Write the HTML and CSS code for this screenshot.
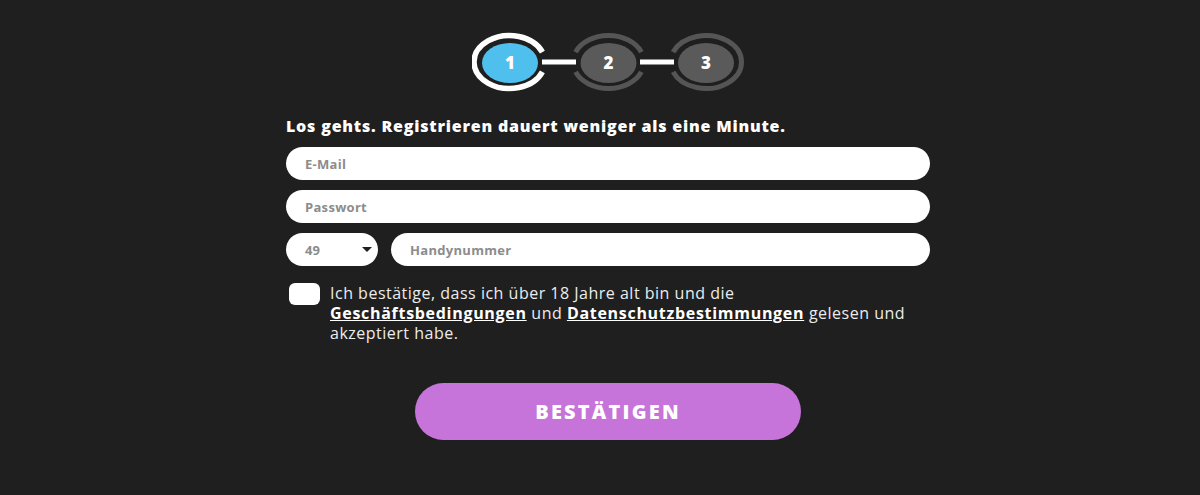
FILE: index.html
```html
<!DOCTYPE html>
<html lang="de">
<head>
<meta charset="utf-8">
<title>Registrieren</title>
<link rel="stylesheet" href="styles.css">
</head>
<body>
<div class="page">
  <main class="signup">
    <div class="stepper">
      <svg class="stepper-svg" width="280" height="62" viewBox="0 0 280 62" aria-hidden="true">
        <rect x="70" y="28.5" width="34" height="5" fill="#ffffff"/>
        <rect x="168" y="28.5" width="34" height="5" fill="#ffffff"/>
        <path d="M 70.4 21.1 A 35.5 26.5 0 1 0 70.4 40.9" fill="none" stroke="#ffffff" stroke-width="5.5"/>
        <ellipse cx="38" cy="32" rx="28" ry="20" fill="#4fbfee"/>
        <text x="38" y="38" class="step-num">1</text>
        <path d="M 103.6 21.1 A 35.5 26.5 0 0 1 169.4 21.1" fill="none" stroke="#555555" stroke-width="5"/>
        <path d="M 103.6 40.9 A 35.5 26.5 0 0 0 169.4 40.9" fill="none" stroke="#555555" stroke-width="5"/>
        <ellipse cx="136.5" cy="32" rx="28" ry="20" fill="#5a5a5a"/>
        <text x="136.5" y="38" class="step-num">2</text>
        <path d="M 201.1 21.1 A 35.5 26.5 0 1 1 201.1 40.9" fill="none" stroke="#555555" stroke-width="5"/>
        <ellipse cx="234" cy="32" rx="28" ry="20" fill="#5a5a5a"/>
        <text x="234" y="38" class="step-num">3</text>
      </svg>
    </div>

    <h1 class="title">Los gehts. Registrieren dauert weniger als eine Minute.</h1>

    <form class="form">
      <input class="field" type="email" placeholder="E-Mail">
      <input class="field" type="password" placeholder="Passwort">
      <div class="phone-row">
        <div class="select">
          <span class="select-value">49</span>
          <span class="select-arrow"></span>
        </div>
        <input class="field field-phone" type="tel" placeholder="Handynummer">
      </div>

      <label class="consent">
        <span class="checkbox"></span>
        <span class="consent-text">Ich bestätige, dass ich über 18 Jahre alt bin und die <a href="#" class="link">Geschäftsbedingungen</a> und <a href="#" class="link">Datenschutzbestimmungen</a> gelesen und akzeptiert habe.</span>
      </label>

      <div class="actions">
        <button type="button" class="submit">BESTÄTIGEN</button>
      </div>
    </form>
  </main>
</div>
</body>
</html>
```

FILE: styles.css
```css
html, body {
  margin: 0;
  padding: 0;
  background: #1f1f1f;
}

body {
  font-family: "Open Sans", "DejaVu Sans", sans-serif;
  color: #ececec;
  height: 495px;
  overflow: hidden;
}

.page {
  display: flex;
  justify-content: center;
  padding-left: 16px;
}

.signup {
  width: 644px;
  display: flex;
  flex-direction: column;
}

.stepper {
  display: flex;
  justify-content: center;
  padding-top: 31px;
}

.stepper-svg {
  display: block;
  margin-left: 7px;
}

.step-num {
  font-family: "Open Sans", sans-serif;
  font-weight: 800;
  font-size: 17px;
  fill: #ffffff;
  text-anchor: middle;
}

.title {
  margin: 23px 0 0 0;
  font-size: 16px;
  line-height: 20px;
  font-weight: 800;
  color: #ffffff;
  letter-spacing: 0.8px;
  white-space: nowrap;
}

.form {
  display: flex;
  flex-direction: column;
  gap: 10px;
  margin-top: 11px;
}

.field {
  box-sizing: border-box;
  width: 100%;
  height: 33px;
  border: none;
  border-radius: 17px;
  background: #ffffff;
  padding: 0 19px;
  font-family: "Open Sans", sans-serif;
  font-weight: 700;
  font-size: 13px;
  color: #333;
  outline: none;
}

.field::placeholder {
  color: #8c8c8c;
  letter-spacing: 0.3px;
}

.phone-row {
  display: flex;
  gap: 13px;
}

.select {
  box-sizing: border-box;
  flex: 0 0 92px;
  height: 33px;
  border-radius: 17px;
  background: #ffffff;
  display: flex;
  align-items: center;
  justify-content: space-between;
  padding: 0 6px 0 19px;
}

.select-value {
  font-weight: 700;
  font-size: 13px;
  color: #8c8c8c;
}

.select-arrow {
  width: 0;
  height: 0;
  border-left: 5px solid transparent;
  border-right: 5px solid transparent;
  border-top: 5px solid #1f1f1f;
}

.field-phone {
  flex: 1;
  width: auto;
}

.consent {
  display: flex;
  gap: 10px;
  margin-top: 7px;
  cursor: pointer;
}

.checkbox {
  flex: 0 0 31px;
  height: 22px;
  margin-left: 3px;
  margin-top: 0;
  background: #ffffff;
  border-radius: 6px;
}

.consent-text {
  font-size: 16px;
  line-height: 20px;
  letter-spacing: 0.5px;
  color: #ececec;
  max-width: 585px;
}

.link {
  color: #ffffff;
  font-weight: 700;
  letter-spacing: 0.7px;
  text-decoration: underline;
}

.actions {
  display: flex;
  justify-content: center;
  margin-top: 30px;
}

.submit {
  width: 386px;
  height: 57px;
  border: none;
  border-radius: 29px;
  background: #c674d9;
  color: #ffffff;
  font-family: "Open Sans", sans-serif;
  font-weight: 800;
  font-size: 20px;
  letter-spacing: 2.2px;
  cursor: pointer;
}
```
